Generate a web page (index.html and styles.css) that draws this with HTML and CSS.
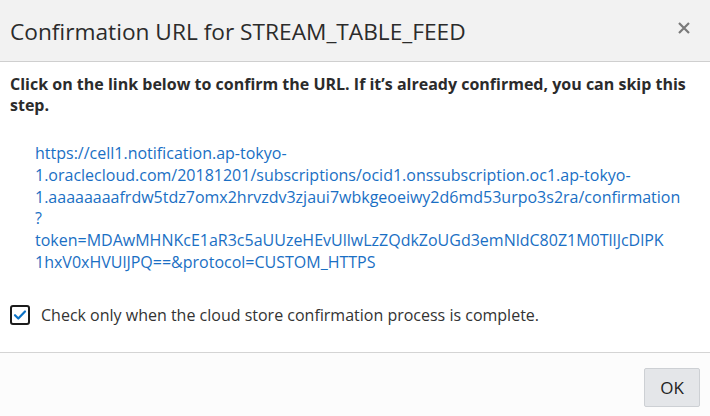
FILE: index.html
```html
<!DOCTYPE html>
<html lang="en">
<head>
<meta charset="utf-8">
<title>Confirmation URL</title>
<link rel="stylesheet" href="styles.css">
</head>
<body>
<div class="dialog">
  <header class="dialog-header">
    <h1 class="dialog-title">Confirmation URL for STREAM_TABLE_FEED</h1>
    <button class="close-btn" aria-label="Close">
      <svg width="12" height="12" viewBox="0 0 12 12"><path d="M1 1 L11 11 M11 1 L1 11" stroke="#7a7a7a" stroke-width="2.2" fill="none"/></svg>
    </button>
  </header>
  <main class="dialog-body">
    <p class="instructions">Click on the link below to confirm the URL. If it’s already confirmed, you can skip this step.</p>
    <a class="confirm-link" href="#">https://cell1.notification.ap-tokyo-<br>1.oraclecloud.com/20181201/subscriptions/ocid1.onssubscription.oc1.ap-tokyo-<br>1.aaaaaaaafrdw5tdz7omx2hrvzdv3zjaui7wbkgeoeiwy2d6md53urpo3s2ra/confirmation<br>?<br>token=MDAwMHNKcE1aR3c5aUUzeHEvUllwLzZQdkZoUGd3emNldC80Z1M0TllJcDlPK<br>1hxV0xHVUlJPQ==&amp;protocol=CUSTOM_HTTPS</a>
    <label class="check-row">
      <span class="checkbox">
        <svg width="16" height="16" viewBox="0 0 16 16"><path d="M3 8.2 L6.3 11.5 L13 4.5" stroke="#0b72c6" stroke-width="2.2" fill="none" stroke-linecap="round" stroke-linejoin="round"/></svg>
      </span>
      <span class="check-label">Check only when the cloud store confirmation process is complete.</span>
    </label>
  </main>
  <footer class="dialog-footer">
    <button class="ok-btn">OK</button>
  </footer>
</div>
</body>
</html>
```

FILE: styles.css
```css
html, body {
  margin: 0;
  padding: 0;
  background: #ffffff;
}
body {
  font-family: "Open Sans", "Noto Sans", sans-serif;
  color: #333333;
}
.dialog {
  width: 710px;
  height: 416px;
  display: flex;
  flex-direction: column;
  background: #ffffff;
}
.dialog-header {
  height: 61px;
  flex: none;
  background: #f2f2f2;
  border-bottom: 1px solid #cfcfcf;
  display: flex;
  align-items: center;
  justify-content: space-between;
  padding: 0 20px 0 10px;
}
.dialog-title {
  margin: 0;
  font-size: 22.7px;
  font-weight: 400;
  color: #2b2b2b;
  line-height: 30px;
  padding-top: 3px;
}
.close-btn {
  border: 0;
  background: transparent;
  padding: 0;
  width: 12px;
  height: 12px;
  display: flex;
  margin-bottom: 6px;
}
.dialog-body {
  flex: none;
  height: 291px;
  padding: 12px 10px 0 10px;
  box-sizing: border-box;
  border-bottom: 1px solid #d4d4d4;
  display: flex;
  flex-direction: column;
}
.instructions {
  margin: 0;
  font-size: 16px;
  font-weight: 700;
  line-height: 21px;
  color: #2b2b2b;
}
.confirm-link {
  display: block;
  margin: 27px 0 0 25px;
  font-size: 16px;
  line-height: 21.8px;
  color: #1a6fc4;
  text-decoration: none;
  white-space: nowrap;
}
.check-row {
  display: flex;
  align-items: center;
  gap: 11px;
  margin-top: 30px;
}
.checkbox {
  width: 20px;
  height: 20px;
  box-sizing: border-box;
  border: 2px solid #1c1c1c;
  border-radius: 3px;
  display: flex;
  align-items: center;
  justify-content: center;
  background: #ffffff;
}
.check-label {
  font-size: 16px;
  line-height: 22px;
  color: #333333;
}
.dialog-footer {
  flex: 1;
  display: flex;
  justify-content: flex-end;
  align-items: flex-start;
  padding: 15px 10px 0 0;
  background: #fcfcfc;
}
.ok-btn {
  width: 56px;
  height: 39px;
  border: 1px solid #cdd0d4;
  border-radius: 2px;
  background: #e4e6e9;
  font-family: "Open Sans", "Noto Sans", sans-serif;
  font-size: 17px;
  color: #222222;
  padding: 0;
}
```
